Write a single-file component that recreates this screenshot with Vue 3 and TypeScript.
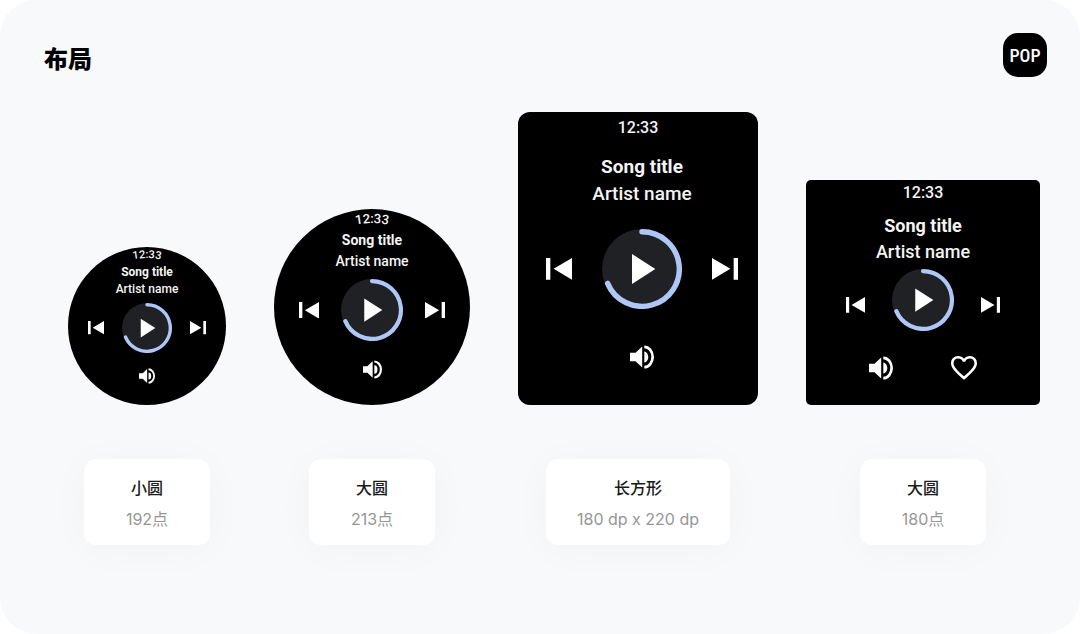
<script setup lang="ts">
interface Device {
  id: string
  shape: 'small-round' | 'large-round' | 'rectangle' | 'square'
  name: string
  size: string
  favorite: boolean
  arc?: { diameter: number; height: number; path: string }
}

const devices: Device[] = [
  {
    id: 'd192',
    shape: 'small-round',
    name: '小圆',
    size: '192点',
    favorite: false,
    arc: { diameter: 158, height: 17, path: 'M11 79A68 68 0 0 1 147 79' },
  },
  {
    id: 'd213',
    shape: 'large-round',
    name: '大圆',
    size: '213点',
    favorite: false,
    arc: { diameter: 196, height: 21, path: 'M14 98A84 84 0 0 1 182 98' },
  },
  { id: 'd220', shape: 'rectangle', name: '长方形', size: '180 dp x 220 dp', favorite: false },
  { id: 'd180', shape: 'square', name: '大圆', size: '180点', favorite: true },
]
</script>

<template>
  <main class="page">
    <header class="header">
      <h1 class="heading">布局</h1>
      <div class="logo">POP</div>
    </header>

    <section class="devices">
      <figure v-for="d in devices" :key="d.id" class="device">
        <div class="watch" :class="d.shape">
          <svg
            v-if="d.arc"
            class="time-arc"
            :viewBox="`0 0 ${d.arc.diameter} ${d.arc.height}`"
          >
            <path :id="`arc-${d.id}`" :d="d.arc.path" fill="none" />
            <text text-anchor="middle">
              <textPath :href="`#arc-${d.id}`" startOffset="50%">12:33</textPath>
            </text>
          </svg>
          <div v-else class="time">12:33</div>

          <div class="player">
            <div class="song">Song title</div>
            <div class="artist">Artist name</div>

            <div class="controls">
              <button class="skip" type="button" aria-label="Previous">
                <svg viewBox="0 0 24 20"><path d="M0 0h4v20H0zM24 0v20L7 10z" /></svg>
              </button>
              <button class="play" type="button" aria-label="Play">
                <svg viewBox="0 0 80 80">
                  <circle cx="40" cy="40" r="40" fill="#202125" />
                  <path
                    d="M40 2.7A37.3 37.3 0 1 1 5.6 54.4"
                    fill="none"
                    stroke="#afc7f6"
                    stroke-width="5.4"
                    stroke-linecap="round"
                  />
                  <path d="M30 25v30l23.3-15z" />
                </svg>
              </button>
              <button class="skip" type="button" aria-label="Next">
                <svg viewBox="0 0 24 20"><path d="M20 0h4v20h-4zM0 0v20l17-10z" /></svg>
              </button>
            </div>

            <div class="actions">
              <button class="volume" type="button" aria-label="Volume">
                <svg viewBox="0 0 24 24">
                  <path
                    d="M0 7.8h5.5l6.7-6.2v20.8l-6.7-6.2H0zM14.3 6.6a4 5.4 0 0 1 0 10.8zM14.3.5a9.7 11.5 0 0 1 0 23v-2.8a7 8.7 0 0 0 0-17.4z"
                  />
                </svg>
              </button>
              <button v-if="d.favorite" class="favorite" type="button" aria-label="Favorite">
                <svg viewBox="2 3 20 18.35">
                  <path
                    d="M16.5 3c-1.74 0-3.41.81-4.5 2.09C10.91 3.81 9.24 3 7.5 3 4.42 3 2 5.42 2 8.5c0 3.78 3.4 6.86 8.55 11.54L12 21.35l1.45-1.32C18.6 15.36 22 12.28 22 8.5 22 5.42 19.58 3 16.5 3zm-4.4 15.55l-.1.1-.1-.1C7.14 14.24 4 11.39 4 8.5 4 6.5 5.5 5 7.5 5c1.54 0 3.04.99 3.57 2.36h1.87C13.46 5.99 14.96 5 16.5 5c2 0 3.5 1.5 3.5 3.5 0 2.89-3.14 5.74-7.9 10.05z"
                  />
                </svg>
              </button>
            </div>
          </div>
        </div>

        <figcaption class="card">
          <div class="card-name">{{ d.name }}</div>
          <div class="card-size">{{ d.size }}</div>
        </figcaption>
      </figure>
    </section>
  </main>
</template>

<style>
body {
  margin: 0;
  background: #fff;
}
</style>

<style scoped>
.page {
  box-sizing: border-box;
  min-height: 100vh;
  border-radius: 36px;
  background: #f8f9fb;
  font-family: Roboto, 'Noto Sans CJK SC', sans-serif;
}

.header {
  display: flex;
  align-items: flex-end;
  justify-content: space-between;
  padding: 33px 33px 0 44px;
}

.heading {
  margin: 0;
  font: 900 24px/38px 'Noto Sans CJK SC', sans-serif;
  color: #000;
}

.logo {
  width: 44px;
  height: 44px;
  border-radius: 15px;
  background: #000;
  color: #fff;
  font: 500 18px/46px 'Roboto Condensed', Roboto, sans-serif;
  text-align: center;
}

.devices {
  display: flex;
  align-items: flex-end;
  justify-content: space-between;
  padding: 35px 40px 0 68px;
}

.device {
  display: flex;
  flex-direction: column;
  align-items: center;
  gap: 54px;
  margin: 0;
}

.watch {
  box-sizing: border-box;
  overflow: hidden;
  background: #000;
  color: #f4f4f4;
  font-weight: 500;
  text-align: center;
}

.song {
  font-weight: 700;
}

.time-arc {
  display: block;
  width: 100%;
  overflow: visible;
  fill: #f4f4f4;
}

button {
  display: block;
  padding: 0;
  border: 0;
  background: none;
  cursor: pointer;
}

button svg {
  display: block;
  width: 100%;
  fill: #fff;
}

.controls {
  display: flex;
  align-items: center;
  justify-content: space-between;
}

.actions {
  display: flex;
  align-items: center;
  justify-content: center;
  gap: 58px;
}

.small-round {
  width: 158px;
  height: 158px;
  border-radius: 50%;
  font-size: 12px;
  line-height: 17px;
}
.small-round .time-arc { font-size: 11px; }
.small-round .controls { margin-top: 5px; padding: 0 20px; }
.small-round .skip { width: 16px; }
.small-round .play { width: 50px; }
.small-round .actions { margin-top: 15px; }
.small-round .volume { width: 16px; }

.large-round {
  width: 196px;
  height: 196px;
  border-radius: 50%;
  font-size: 14px;
  line-height: 21px;
}
.large-round .time-arc { font-size: 13px; }
.large-round .controls { margin-top: 7px; padding: 0 25px; }
.large-round .skip { width: 20px; }
.large-round .play { width: 62px; }
.large-round .actions { margin-top: 19px; }
.large-round .volume { width: 19px; }

.rectangle {
  width: 240px;
  height: 293px;
  border-radius: 12px;
  font-size: 19px;
  line-height: 27px;
}
.rectangle .time { font-size: 16px; line-height: 32px; }
.rectangle .player { padding: 9px 20px 0 28px; }
.rectangle .controls { margin-top: 22px; }
.rectangle .skip { width: 26px; }
.rectangle .play { width: 80px; }
.rectangle .actions { margin-top: 36px; }
.rectangle .volume { width: 24px; }

.square {
  width: 234px;
  height: 225px;
  border-radius: 5px;
  font-size: 18px;
  line-height: 26px;
}
.square .time { font-size: 16px; }
.square .player { padding: 7px 40px 0; }
.square .controls { margin-top: 4px; }
.square .skip { width: 19px; padding-top: 10px; }
.square .play { width: 62px; }
.square .actions { margin-top: 25px; }
.square .volume { width: 24px; }
.square .favorite { width: 26px; }

.card {
  box-sizing: border-box;
  display: flex;
  flex-direction: column;
  gap: 8px;
  min-width: 126px;
  padding: 16px 31px 14px;
  border-radius: 12px;
  background: #fff;
  box-shadow: 0 4px 40px rgba(0, 0, 0, 0.03);
  font-size: 16px;
  line-height: 24px;
  text-align: center;
}

.card-name {
  font-family: 'Noto Sans CJK SC', sans-serif;
  font-weight: 500;
  color: #1a1a1a;
}

.card-size {
  font-family: Inter, 'Noto Sans CJK SC', sans-serif;
  color: #969696;
}
</style>
